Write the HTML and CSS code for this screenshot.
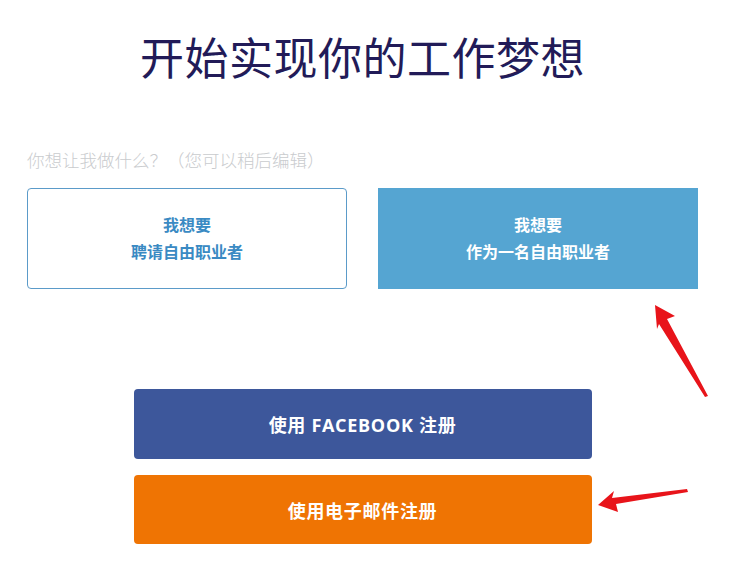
FILE: index.html
```html
<!DOCTYPE html>
<html lang="zh-CN">
<head>
<meta charset="utf-8">
<title>开始实现你的工作梦想</title>
<link rel="stylesheet" href="styles.css">
</head>
<body>
<div class="page">
  <h1 class="title">开始实现你的工作梦想</h1>
  <p class="prompt">你想让我做什么？（您可以稍后编辑）</p>
  <div class="choices">
    <div class="choice choice-outline">
      <span>我想要</span>
      <span>聘请自由职业者</span>
    </div>
    <div class="choice choice-filled">
      <span>我想要</span>
      <span>作为一名自由职业者</span>
    </div>
  </div>
  <div class="signup">
    <div class="btn btn-facebook">使用 FACEBOOK 注册</div>
    <div class="btn btn-email">使用电子邮件注册</div>
  </div>
</div>
<svg class="annotations" width="738" height="577" viewBox="0 0 738 577" aria-hidden="true">
  <polygon fill="#e8141a" points="655,305 675,316 667,319 708,396 705,397 659,324 657,329"/>
  <polygon fill="#e8141a" points="598,505 614,491 612,498 687,489 688,492 616,504 618,512"/>
</svg>
</body>
</html>
```

FILE: styles.css
```css
html, body {
  margin: 0;
  padding: 0;
  background: #ffffff;
}

body {
  position: relative;
  width: 738px;
  height: 577px;
  overflow: hidden;
  font-family: "Open Sans", "Noto Sans CJK SC", sans-serif;
}

.page {
  width: 671px;
  margin-left: 27px;
  display: flex;
  flex-direction: column;
}

.title {
  margin: 30px 0 0;
  font-size: 44px;
  line-height: 56px;
  font-weight: 400;
  color: #221b58;
  text-align: center;
  letter-spacing: 0.5px;
}

.prompt {
  margin: 62px 0 0;
  font-size: 17.5px;
  line-height: 24px;
  font-weight: 300;
  color: #c9cbce;
}

.choices {
  margin-top: 16px;
  display: flex;
  gap: 31px;
}

.choice {
  box-sizing: border-box;
  width: 320px;
  height: 101px;
  display: flex;
  flex-direction: column;
  align-items: center;
  justify-content: center;
  gap: 3px;
  font-size: 16px;
  line-height: 24px;
  font-weight: 700;
}

.choice-outline {
  border: 1px solid #5b9bc9;
  border-radius: 4px;
  color: #3a8ac3;
}

.choice-filled {
  background: #55a5d2;
  color: #ffffff;
}

.signup {
  width: 458px;
  margin: 100px auto 0;
  display: flex;
  flex-direction: column;
  gap: 16px;
}

.btn {
  height: 70px;
  border-radius: 4px;
  display: flex;
  align-items: center;
  justify-content: center;
  color: #ffffff;
  font-size: 18px;
  font-weight: 700;
  letter-spacing: 0.7px;
}

.btn-facebook {
  background: #3d579b;
}

.btn-email {
  height: 69px;
  background: #ef7403;
}

.annotations {
  position: absolute;
  left: 0;
  top: 0;
  pointer-events: none;
}
```
